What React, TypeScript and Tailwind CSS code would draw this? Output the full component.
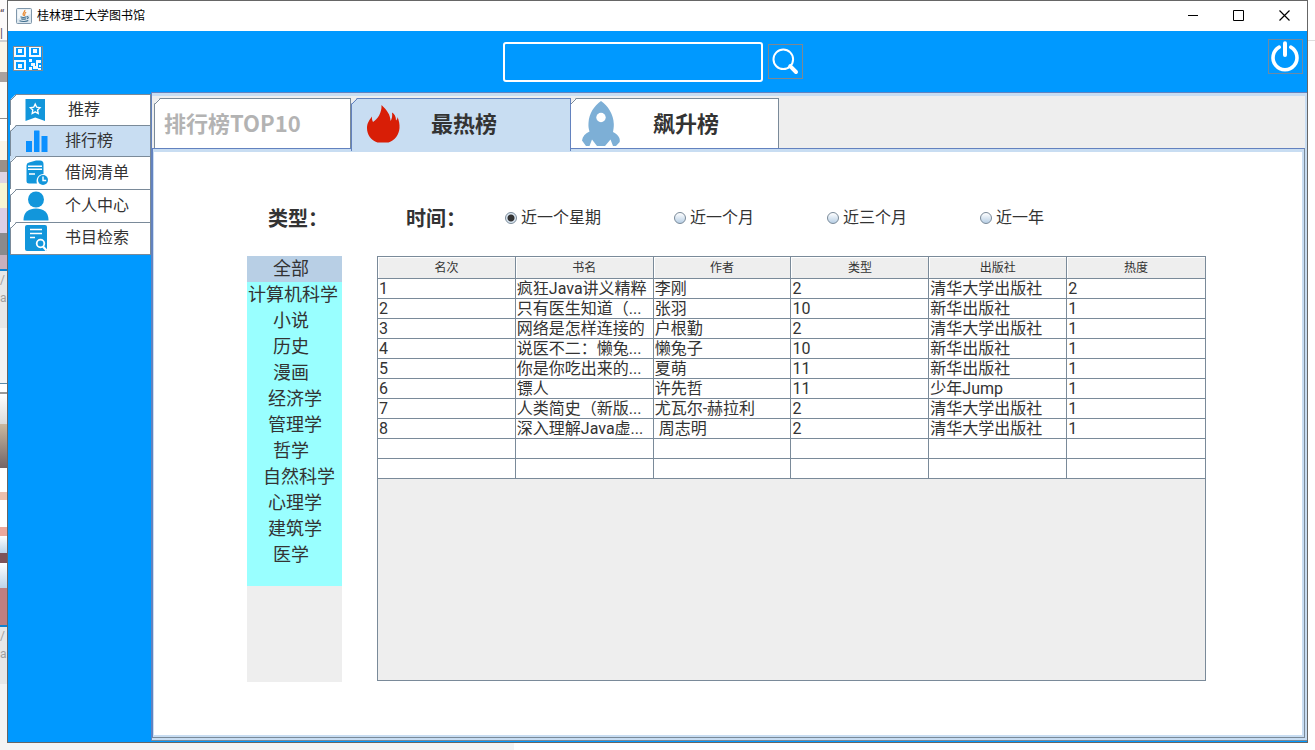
import React, { useState } from "react";

const FONT = "font-['Roboto','Noto_Sans_CJK_SC',sans-serif]";
const HEADING_FONT = "font-['Noto_Sans_CJK_SC',sans-serif]";

/* Slice of the desktop visible to the left of the window, top to bottom. */
const backdrop = [
  { cls: "h-[6px] bg-[#fcfafa]" },
  { cls: "h-[18px] bg-[#fcfafa] text-[#5a4a58]", text: "“" },
  { cls: "h-[16px] bg-[#fcfafa] text-[#5a4a58]", text: "|" },
  { cls: "h-[2px] bg-[#d0d0d0]" },
  { cls: "h-[30px] bg-[#fbf6e8]" },
  { cls: "h-[10px] bg-[#aaa29e]" },
  { cls: "h-[36px] bg-[#fdfcf8]" },
  { cls: "h-px bg-[#8f8f8f]" },
  { cls: "h-[22px] bg-white" },
  { cls: "h-[19px] bg-[#fbf6e8]" },
  { cls: "h-[12px] bg-[#9a9088]" },
  { cls: "h-[11px] bg-[#e0d4e4]" },
  { cls: "h-[25px] bg-[#f8f6d4]" },
  { cls: "h-[25px] bg-[#ddd0e6]" },
  { cls: "h-[22px] bg-[#8b8a8c]" },
  { cls: "h-[14px] bg-[#c9b0bd]" },
  { cls: "h-[2px] bg-[#1182cf]" },
  { cls: "h-[18px] bg-[#e8e8e8] text-[#a0a0a0]", text: "/" },
  { cls: "h-[39px] bg-[#e8e8e8] text-[#a0a0a0]", text: "a" },
  { cls: "h-[55px] bg-[#f4f4f4]" },
  { cls: "h-px bg-[#5b8aa8]" },
  { cls: "h-[8px] bg-white" },
  { cls: "h-[2px] bg-[#999999]" },
  { cls: "h-[30px] bg-linear-to-b from-white to-[#dcdcdc]" },
  { cls: "h-[44px] bg-linear-to-b from-[#cbb9a0] to-[#746668]" },
  { cls: "h-[24px] bg-white" },
  { cls: "h-[8px] bg-[#ecc0ae]" },
  { cls: "h-[27px] bg-white" },
  { cls: "h-[9px] bg-[#eca89c]" },
  { cls: "h-[17px] bg-linear-to-b from-white to-[#bcd4ea]" },
  { cls: "h-[10px] bg-[#7d5358]" },
  { cls: "h-[25px] bg-linear-to-b from-white to-[#bcd4ea]" },
  { cls: "h-[37px] bg-[#c07f80]" },
  { cls: "h-[2px] bg-[#1182cf]" },
  { cls: "h-[18px] bg-[#e8e8e8] text-[#a0a0a0]", text: "/" },
  { cls: "h-[39px] bg-[#e8e8e8] text-[#a0a0a0]", text: "a" },
];

function Corner({ fill, stroke }: { fill: string; stroke: string }) {
  return (
    <svg className="absolute -top-px -left-px size-[7px]" viewBox="0 0 7 7" aria-hidden="true">
      <path d="M0 0H6L0 6Z" fill={fill} />
      <path d="M6.5 .5L.5 6.5" stroke={stroke} fill="none" />
    </svg>
  );
}

function JavaIcon() {
  return (
    <svg className="size-4" viewBox="0 0 16 16" aria-hidden="true">
      <rect x=".5" y=".5" width="15" height="15" rx="1" fill="#dce7ef" stroke="#7f97ab" />
      <path d="M1.5 11V1.500H14.500V6Z" fill="#f5f9fb" />
      <path d="M8.800 2C9.500 4 5.500 4.600 7.500 7.800M10.200 4.300C7.600 5.400 9.600 6.200 8.300 7.900" stroke="#e8862c" strokeWidth="1.200" fill="none" />
      <path d="M4.500 8.700C6 9.500 9 9.400 10.500 8.700M5.200 10.700C7 11.400 8.500 11.300 10 10.700M10.800 8.700C13 8.400 12.500 10.400 10.800 10.800M3.500 12.700C6 13.800 10.500 13.600 12.300 12.500" stroke="#41708f" strokeWidth="1.100" fill="none" />
    </svg>
  );
}

function QrIcon() {
  return (
    <svg className="h-[25px] w-[30px]" viewBox="0 0 30 25" aria-hidden="true">
      <rect x=".5" y=".5" width="29" height="24" fill="none" stroke="#83898f" />
      <g fill="none" stroke="#f4faff" strokeWidth="2">
        <path d="M2 1V10H12V1M17 1V10H27V1M2 24V15H12V24" />
        <path d="M1 1.500H13M16 1.500H28M1 14.500H13M1 23.500H13" strokeWidth="1" />
      </g>
      <g fill="#f4faff">
        <rect x="5" y="3" width="4" height="4" />
        <rect x="20" y="3" width="4" height="4" />
        <rect x="5" y="18" width="4" height="4" />
        <path d="M16 13h3v3h-3zM23 14h5v3h-3v3h-2zM18 17h4v3h3v3h-5v-3h-2zM16 21h3v3h-3zM26 19h2v2h-2zM25 22h3v2h-3z" />
      </g>
    </svg>
  );
}

function BookmarkIcon() {
  return (
    <svg className="h-[30px] w-[26px]" viewBox="0 0 26 30" aria-hidden="true">
      <path d="M2.500 4H22V26L12.200 22.500L2.500 26Z" fill="#1296db" />
      <path d="M12.200 9.100L13.700 12.200L17 12.700L14.600 15.100L15.200 18.500L12.200 16.900L9.200 18.500L9.800 15.100L7.400 12.700L10.700 12.200Z" fill="none" stroke="white" strokeWidth="1.400" />
    </svg>
  );
}

function BarsIcon() {
  return (
    <svg className="h-[30px] w-[26px]" viewBox="0 0 26 30" aria-hidden="true">
      <path d="M3 15H9V26H3ZM11 5Q11 4.500 11.500 4.500H16Q16.500 4.500 16.500 5V26H11ZM18.500 10H24.500V26H18.500Z" fill="#0b90ff" />
    </svg>
  );
}

function ListClockIcon() {
  return (
    <svg className="h-[30px] w-[26px]" viewBox="0 0 26 30" aria-hidden="true">
      <path d="M6 4.500L13 2.500H17Q20.500 2.500 20.500 6V16A7 7 0 0 0 14 25.500H6Q3.500 25.500 3.500 23V7.500Q3.500 5 6 4.500Z" fill="#1296db" />
      <path d="M5 8.300H19M5 11.300H19M6 16H12" stroke="white" strokeWidth="1.500" />
      <circle cx="20" cy="22" r="5" fill="#1296db" />
      <path d="M20 18.500V22.500H23.200" stroke="white" strokeWidth="1.400" fill="none" />
    </svg>
  );
}

function PersonIcon() {
  return (
    <svg className="h-[30px] w-[26px]" viewBox="0 0 26 30" aria-hidden="true">
      <circle cx="13" cy="8.500" r="8" fill="#1296db" />
      <path d="M.5 29C.5 21 6 17.500 13 17.500S25.500 21 25.500 29Q25.500 29.500 25 29.500H1Q.5 29.500 .5 29Z" fill="#1296db" />
    </svg>
  );
}

function DocSearchIcon() {
  return (
    <svg className="h-[30px] w-[26px]" viewBox="0 0 26 30" aria-hidden="true">
      <path d="M4 2H22Q24 2 24 4V26Q24 28 22 28H4Q2 28 2 26V4Q2 2 4 2Z" fill="#1296db" />
      <path d="M7 6.500H19M7 10.500H19M7 14.500H12" stroke="white" strokeWidth="1.600" />
      <circle cx="17.500" cy="20.500" r="3.800" stroke="white" strokeWidth="1.800" fill="none" />
      <path d="M20 23.500L23.500 27.500" stroke="white" strokeWidth="2.200" />
    </svg>
  );
}

function FlameIcon() {
  return (
    <svg className="h-[38px] w-[34px] shrink-0" viewBox="0 0 34 38" aria-hidden="true">
      <path d="M15.500 0C21 5 24.500 10 24.500 16C26 14 26.500 11 26 7.500C28.500 9 30 11.500 30 15.500C31 14.500 31.500 13.500 31.500 12C33 16 33.800 19 33.500 23C33 30 29 35 22.500 37.500H11.500C5 35 1 30 1 23C1 18 3.500 15 6 11.500C5.800 13.500 6 15 7 17C11.500 14 16 8 15.500 0Z" fill="#d81e06" />
    </svg>
  );
}

function RocketIcon() {
  return (
    <svg className="h-[46px] w-[40px] shrink-0" viewBox="0 0 40 46" aria-hidden="true">
      <path d="M20 0C27 5 32.500 13 32.800 23C32.900 26 32.500 28 32 31C37 33.500 39.500 37 38.700 41L35 45H32L29.500 38.500L24 45H16L11 38.500L8.500 45H5L1 39.500C1.500 35.500 4 32.500 8.500 30.500C7.500 27.500 7.300 25 7.500 22C8 12.500 13 5 20 0Z" fill="#7dafd6" />
      <circle cx="20" cy="16.500" r="4.700" fill="white" />
    </svg>
  );
}

const navItems = [
  { label: "推荐", Icon: BookmarkIcon, cls: "h-[31px] gap-[19px] bg-white" },
  { label: "排行榜", Icon: BarsIcon, cls: "h-[31px] gap-4 bg-[#c8ddf2]" },
  { label: "借阅清单", Icon: ListClockIcon, cls: "h-[33px] gap-4 bg-white" },
  { label: "个人中心", Icon: PersonIcon, cls: "h-[33px] gap-4 bg-white" },
  { label: "书目检索", Icon: DocSearchIcon, cls: "h-[33px] gap-4 border-b bg-white" },
];

const categories = [
  { name: "全部", pad: "pl-[26px]" },
  { name: "计算机科学", pad: "pl-px" },
  { name: "小说", pad: "pl-[26px]" },
  { name: "历史", pad: "pl-[26px]" },
  { name: "漫画", pad: "pl-[26px]" },
  { name: "经济学", pad: "pl-[21px]" },
  { name: "管理学", pad: "pl-[21px]" },
  { name: "哲学", pad: "pl-[26px]" },
  { name: "自然科学", pad: "pl-4" },
  { name: "心理学", pad: "pl-[21px]" },
  { name: "建筑学", pad: "pl-[21px]" },
  { name: "医学", pad: "pl-[26px]" },
];

const periods = ["近一个星期", "近一个月", "近三个月", "近一年"];
const columns = ["名次", "书名", "作者", "类型", "出版社", "热度"];
const rows = [
  ["1", "疯狂Java讲义精粹", "李刚", "2", "清华大学出版社", "2"],
  ["2", "只有医生知道（...", "张羽", "10", "新华出版社", "1"],
  ["3", "网络是怎样连接的", "户根勤", "2", "清华大学出版社", "1"],
  ["4", "说医不二：懒兔...", "懒兔子", "10", "新华出版社", "1"],
  ["5", "你是你吃出来的...", "夏萌", "11", "新华出版社", "1"],
  ["6", "镖人", "许先哲", "11", "少年Jump", "1"],
  ["7", "人类简史（新版...", "尤瓦尔-赫拉利", "2", "清华大学出版社", "1"],
  ["8", "深入理解Java虚...", " 周志明", "2", "清华大学出版社", "1"],
  ["", "", "", "", "", ""],
  ["", "", "", "", "", ""],
];

export default function App() {
  const [period, setPeriod] = useState(periods[0]);
  const [category, setCategory] = useState("全部");
  const [query, setQuery] = useState("");

  return (
    <div className={`flex h-screen min-h-[750px] bg-white text-[#333333] ${FONT}`}>
      <div className="flex w-[7px] shrink-0 flex-col overflow-hidden bg-[#f4f4f4] text-[12px] leading-[18px]" aria-hidden="true">
        {backdrop.map((b, i) => (
          <div key={i} className={`shrink-0 ${b.cls}`}>{b.text}</div>
        ))}
      </div>

      <div className="flex min-w-0 flex-1 flex-col">
        <div className="flex min-h-0 flex-1 flex-col border border-[#666666] bg-[#0099ff]">
          <header className="flex h-[30px] shrink-0 items-center bg-white pb-px pl-2 text-black">
            <JavaIcon />
            <h1 className="ml-[5px] flex-1 text-[12px] leading-4">桂林理工大学图书馆</h1>
            <button aria-label="最小化" className="flex h-full w-[46px] items-center justify-center">
              <svg className="size-[11px]" viewBox="0 0 11 11"><path d="M0 5.500H10" stroke="black" /></svg>
            </button>
            <button aria-label="最大化" className="flex h-full w-[45px] items-center justify-center">
              <svg className="size-[11px]" viewBox="0 0 11 11"><path d="M.5 .5H10.500V10.500H.5Z" stroke="black" fill="none" /></svg>
            </button>
            <button aria-label="关闭" className="flex h-full w-[46px] items-center justify-center">
              <svg className="size-[11px]" viewBox="0 0 11 11"><path d="M.5 .5L10.500 10.500M10.500 .5L.5 10.500" stroke="black" strokeWidth="1.200" /></svg>
            </button>
          </header>

          <div className="flex h-[61px] shrink-0 items-start pt-2 pr-1 pl-[5px]">
            <div className="flex flex-1">
              <button aria-label="二维码" className="mt-[7px]"><QrIcon /></button>
            </div>
            <form className="mt-[3px] mr-[10px] flex items-start gap-[5px]" onSubmit={(e) => e.preventDefault()}>
              <input
                aria-label="搜索图书"
                value={query}
                onChange={(e) => setQuery(e.target.value)}
                className="h-10 w-[260px] rounded-[3px] border-2 border-white bg-transparent px-2 text-[16px] text-white outline-none"
              />
              <button aria-label="搜索" className="mt-[2px] flex size-[35px] items-center justify-center border border-[#808890]">
                <svg className="size-[33px]" viewBox="0 0 33 33">
                  <circle cx="14.300" cy="14.300" r="9.800" fill="none" stroke="white" strokeWidth="2" />
                  <path d="M21.200 21.200L27 27" stroke="white" strokeWidth="4" strokeLinecap="round" />
                </svg>
              </button>
            </form>
            <div className="flex flex-1 justify-end">
              <button aria-label="退出" className="flex size-[35px] items-center justify-center border border-[#6b8aa6]">
                <svg className="size-[33px]" viewBox="0 0 33 33">
                  <path d="M10.200 7.200A12 12 0 1 0 21.800 7.200" fill="none" stroke="white" strokeWidth="3.600" strokeLinecap="round" />
                  <path d="M16 3.300V15" stroke="white" strokeWidth="4" strokeLinecap="round" />
                </svg>
              </button>
            </div>
          </div>

          <div className="flex min-h-0 flex-1">
            <nav className="w-[143px] shrink-0 pt-[2px] pl-[2px]">
              {navItems.map(({ label, Icon, cls }, i) => (
                <button
                  key={label}
                  className={`relative flex w-full items-center border-t border-r border-l border-[#7a8a99] pb-px pl-3 text-[16px] leading-6 ${cls}`}
                >
                  <Corner fill={i === 0 ? "#0099ff" : i === 2 ? "#c8ddf2" : "#ffffff"} stroke="#7a8a99" />
                  <Icon />
                  <span>{label}</span>
                </button>
              ))}
            </nav>

            <main className="mb-px flex min-w-0 flex-1 flex-col border-t border-b border-l border-[#6382bf] border-b-[#7a8a99]">
              <div className="flex min-h-0 flex-1 flex-col border-t-[3px] border-r-2 border-b-2 border-[#c8ddf2] bg-[#eeeeee]">
                <div className={`flex h-[52px] shrink-0 pt-[2px] pl-[2px] ${HEADING_FONT}`} role="tablist">
                  <button role="tab" className="relative flex w-[197px] items-center border border-b-0 border-[#7a8a99] bg-white pl-[9px] text-[22px] leading-8 font-bold text-[#b3b3b3]">
                    <Corner fill="#eeeeee" stroke="#7a8a99" />
                    <span className="pb-1">排行榜TOP10</span>
                  </button>
                  <button role="tab" aria-selected="true" className="relative z-10 -mb-[3px] flex w-[220px] items-center gap-[31px] border border-b-0 border-[#6382bf] bg-[#c8ddf2] pb-[3px] pl-[14px] text-[22px] leading-8 font-bold">
                    <Corner fill="#eeeeee" stroke="#6382bf" />
                    <FlameIcon />
                    <span className="pb-1">最热榜</span>
                  </button>
                  <button role="tab" className="relative flex w-[208px] items-center gap-8 border border-b-0 border-l-0 border-[#7a8a99] bg-white pl-[10px] text-[22px] leading-8 font-bold">
                    <Corner fill="#eeeeee" stroke="#7a8a99" />
                    <RocketIcon />
                    <span className="pb-1">飙升榜</span>
                  </button>
                </div>

                <section className="flex min-h-0 flex-1 flex-col border border-[#6382bf] border-r-[#7a8a99] border-b-[#7a8a99]">
                  <div className="flex min-h-0 flex-1 flex-col border-t-[3px] border-r-2 border-b-2 border-l border-[#c8ddf2] bg-white pt-[50px] pr-24 pb-[53px] pl-[93px]">
                    <div className="flex h-8 shrink-0 items-center pl-[21px]">
                      <h2 className={`w-[138px] text-[20px] leading-8 font-bold ${HEADING_FONT}`}>类型：</h2>
                      <fieldset className="flex items-center">
                        <legend className={`float-left w-[99px] text-[20px] leading-8 font-bold ${HEADING_FONT}`}>时间：</legend>
                        <div className="flex gap-[73px]">
                          {periods.map((p) => (
                            <label key={p} className="flex items-center gap-1 text-[16px] leading-6 whitespace-nowrap">
                              <input
                                type="radio"
                                name="period"
                                checked={period === p}
                                onChange={() => setPeriod(p)}
                                className={`size-3 appearance-none rounded-full border border-[#7a8a99] ${
                                  period === p
                                    ? "bg-[radial-gradient(circle,#333333_3px,#dce8f3_4px)]"
                                    : "bg-linear-to-b from-white to-[#b8cfe5]"
                                }`}
                              />
                              {p}
                            </label>
                          ))}
                        </div>
                      </fieldset>
                    </div>

                    <div className="mt-[22px] flex min-h-0 flex-1 gap-[35px]">
                      <div className="w-[95px] shrink-0 bg-[#eeeeee]">
                        <ul className="bg-[#99ffff] pb-[18px]">
                          {categories.map((c) => (
                            <li key={c.name}>
                              <button
                                onClick={() => setCategory(c.name)}
                                className={`block h-[26px] w-full text-left text-[18px] leading-[26px] whitespace-nowrap ${c.pad} ${category === c.name ? "bg-[#b8cfe5]" : ""}`}
                              >
                                {c.name}
                              </button>
                            </li>
                          ))}
                        </ul>
                      </div>

                      <div className="mb-px min-w-0 flex-1 border border-[#7a8a99] bg-[#eeeeee]">
                        <table className="w-full table-fixed border-separate border-spacing-0">
                          <thead>
                            <tr>
                              {columns.map((c) => (
                                <th key={c} className="h-[22px] border-r border-b border-[#7a8a99] p-0 text-[12px] leading-5 font-normal inset-shadow-[1px_1px_0_white] last:border-r-0">
                                  {c}
                                </th>
                              ))}
                            </tr>
                          </thead>
                          <tbody>
                            {rows.map((r, i) => (
                              <tr key={i} className="bg-white">
                                {r.map((cell, j) => (
                                  <td key={j} className="h-5 border-r border-b border-[#7a8a99] p-0 pl-px text-[16px] leading-[19px] whitespace-pre last:border-r-0">
                                    {cell}
                                  </td>
                                ))}
                              </tr>
                            ))}
                          </tbody>
                        </table>
                      </div>
                    </div>
                  </div>
                </section>
              </div>
            </main>
          </div>
        </div>
        <div className="flex h-[7px] shrink-0">
          <div className="w-[39%] bg-[#f4f4f4]" />
        </div>
      </div>

      <div className="w-[7px] shrink-0 pt-10">
        <div className="h-px bg-[#dddddd]" />
      </div>
    </div>
  );
}
